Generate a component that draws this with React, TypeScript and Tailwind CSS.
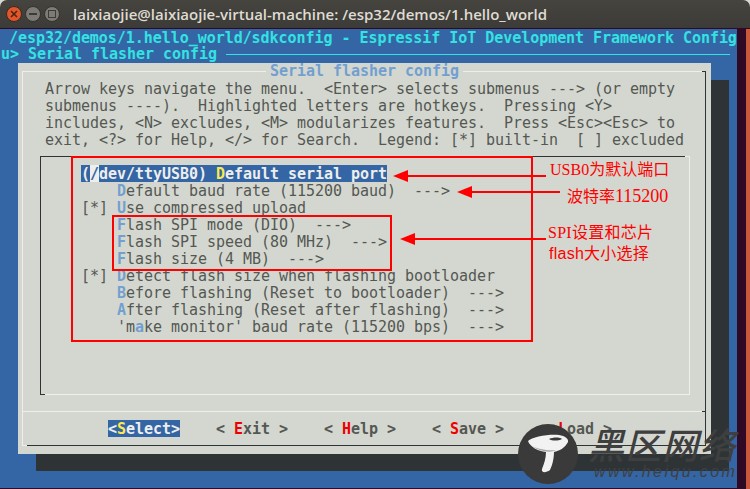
const MONO = "font-['DejaVu_Sans_Mono',monospace]";

// hotkey letter is at `hot`, rest of the row stays grey
const menuRows = [
  { pre: '    ', text: 'Default baud rate (115200 baud)  --->', hot: 0 },
  { pre: '[*] ', text: 'Use compressed upload', hot: 0 },
  { pre: '    ', text: 'Flash SPI mode (DIO)  --->', hot: 0 },
  { pre: '    ', text: 'Flash SPI speed (80 MHz)  --->', hot: 0 },
  { pre: '    ', text: 'Flash size (4 MB)  --->', hot: 0 },
  { pre: '[*] ', text: 'Detect flash size when flashing bootloader', hot: 0 },
  { pre: '    ', text: 'Before flashing (Reset to bootloader)  --->', hot: 0 },
  { pre: '    ', text: 'After flashing (Reset after flashing)  --->', hot: 0 },
  { pre: '    ', text: "'make monitor' baud rate (115200 bps)  --->", hot: 2 },
];

const buttons = ['Exit', 'Help', 'Save', 'Load'];

function MenuRow({ pre, text, hot }: { pre: string; text: string; hot: number }) {
  return (
    <div className="h-[17px] leading-[19px] whitespace-pre">
      {pre}
      {text.slice(0, hot)}
      <span className="font-bold text-[#729fcf]">{text[hot]}</span>
      {text.slice(hot + 1)}
    </div>
  );
}

function WindowButton({ children, color }: { children: React.ReactNode; color: string }) {
  return (
    <div className={`w-[16px] h-[16px] rounded-full border flex items-center justify-center ${color}`}>
      {children}
    </div>
  );
}

export default function App() {
  return (
    <div className={`relative w-[750px] h-[489px] overflow-hidden bg-[#d8d8d4] ${MONO}`}>
      {/* window title bar */}
      <div className="h-[28px] rounded-t-[7px] bg-gradient-to-b from-[#45443f] to-[#3c3b37] flex items-center pl-[6px] gap-[3px]">
        <WindowButton color="bg-[#e2562a] border-[#3a2a20]">
          <svg width="8" height="8" viewBox="0 0 8 8">
            <path d="M1 1L7 7M7 1L1 7" stroke="#4a2415" strokeWidth="1.6" />
          </svg>
        </WindowButton>
        <WindowButton color="bg-[#7c7b75] border-[#33322e]">
          <div className="w-[8px] h-[2px] bg-[#3c3b37]" />
        </WindowButton>
        <WindowButton color="bg-[#7c7b75] border-[#33322e]">
          <div className="w-[8px] h-[8px] border border-[#3c3b37]" />
        </WindowButton>
        <span className="ml-[10px] font-['Open_Sans',sans-serif] font-semibold text-[15px] text-[#dfdbd2] whitespace-pre">
          laixiaojie@laixiaojie-virtual-machine: /esp32/demos/1.hello_world
        </span>
      </div>

      <div className="flex h-[461px] bg-[#300a24] border-t border-[#300a24]">
        {/* terminal */}
        <div className="w-[737px] h-[459px] bg-[#3465a4] overflow-hidden text-[15px] leading-[17px] tracking-[-0.03px]">
          <div className="h-[17px] pt-[1px] pl-[9px] font-bold text-[#34e2e2] whitespace-pre tracking-[-0.045px]">
            /esp32/demos/1.hello_world/sdkconfig - Espressif IoT Development Framework Config
          </div>
          <div className="h-[17px] pl-px flex items-start font-bold text-[#34e2e2] whitespace-pre leading-[17px]">
            u&gt; Serial flasher config
            <div className="ml-[9px] mt-[8px] w-[504px] h-px bg-[#34e2e2]" />
          </div>

          {/* dialog */}
          <div className="relative ml-[18px] w-[693px] h-[391px] pt-[8px] pl-[4px] bg-[#d3d7cf] text-[#555753] shadow-[18px_17px_0_#2e3436]">
            <div className="relative w-[684px] h-[375px] border border-t-[#eeeeec] border-l-[#eeeeec] border-r-[#2e3436] border-b-[#2e3436]">
              <div className="absolute left-[243px] top-[-9px] px-[4px] bg-[#d3d7cf] font-bold text-[#729fcf] whitespace-pre">
                Serial flasher config
              </div>
              <div className="absolute right-[-1px] top-[-1px] w-[4px] h-px bg-[#2e3436]" />
              <div className="absolute left-[-1px] bottom-[-1px] w-[5px] h-px bg-[#eeeeec]" />
              <div className="absolute right-[-1px] top-[339px] w-[4px] h-px bg-[#2e3436]" />

              <div className="pt-[9px] pl-[22px] h-[84px] whitespace-pre">
                <div>Arrow keys navigate the menu.  &lt;Enter&gt; selects submenus ---&gt; (or empty</div>
                <div>submenus ----).  Highlighted letters are hotkeys.  Pressing &lt;Y&gt;</div>
                <div>includes, &lt;N&gt; excludes, &lt;M&gt; modularizes features.  Press &lt;Esc&gt;&lt;Esc&gt; to</div>
                <div>exit, &lt;?&gt; for Help, &lt;/&gt; for Search.  Legend: [*] built-in  [ ] excluded</div>
              </div>

              {/* menu list */}
              <div className="relative ml-[17px] w-[650px] h-[239px] pt-[8px] pl-[40px] border border-t-[#2e3436] border-l-[#2e3436] border-r-[#eeeeec] border-b-[#eeeeec]">
                <div className="absolute right-[-1px] top-[-1px] w-[5px] h-px bg-[#eeeeec]" />
                <div className="absolute left-[-1px] bottom-[-1px] w-[5px] h-px bg-[#2e3436]" />
                <div className="w-[306px] h-[17px] leading-[19px] bg-[#3465a4] text-[#eeeeec] font-bold whitespace-pre">
                  (<span className="inline-block h-[17px] bg-[#eeeeec] text-[#3465a4]">/</span>dev/ttyUSB0) <span className="text-[#fce94f]">D</span>efault serial port
                </div>
                {menuRows.map((r) => (
                  <MenuRow key={r.text} pre={r.pre} text={r.text} hot={r.hot} />
                ))}
              </div>

              {/* button row */}
              <div className="mt-[16px] pt-[8px] border-t border-[#eeeeec] flex gap-[36px] pl-[85px] whitespace-pre leading-[19px] font-bold">
                <div className="w-[72px] h-[17px] bg-[#3465a4] text-[#eeeeec]">
                  &lt;<span className="text-[#fce94f]">S</span>elect&gt;
                </div>
                {buttons.map((b) => (
                  <div key={b} className="w-[72px] h-[17px]">
                    &lt; <span className="text-[#ef0000]">{b[0]}</span>{b.slice(1)} &gt;
                  </div>
                ))}
              </div>
            </div>
          </div>
        </div>
        {/* strip of the next window */}
        <div className="ml-[9px] w-[4px] h-[461px] bg-[#c9573a]" />
      </div>

      {/* annotations drawn on the screenshot */}
      <div className="absolute left-[71px] top-[156px] w-[462px] h-[186px] border-2 border-[#ff0000]" />
      <div className="absolute left-[112px] top-[215px] w-[280px] h-[56px] border-2 border-[#ff0000]" />
      <svg className="absolute left-0 top-0" width="750" height="489">
        <g fill="#ff0000">
          <path d="M403 175H546V177H403Z" />
          <path d="M393 176L408 170V182Z" />
          <path d="M467 191H560V193H467Z" />
          <path d="M457 192L472 186V198Z" />
          <path d="M410 238H546V240H410Z" />
          <path d="M400 239L415 233V245Z" />
        </g>
      </svg>
      <div className="absolute left-[548px] top-[159px] flex flex-col text-[16px] leading-[22px] text-[#ff0000] font-['Liberation_Serif','Noto_Sans_CJK_SC',sans-serif] whitespace-pre">
        <div className="pl-[2px]">USB0为默认端口</div>
        <div className="pl-[19px] mt-[4px]">
          波特率<span className="text-[18px]">115200</span>
        </div>
        <div className="mt-[14px] tracking-[0.25px]">SPI设置和芯片</div>
        <div className="pl-px mt-[-1px] tracking-[0.25px] font-['Liberation_Sans','Noto_Sans_CJK_SC',sans-serif]">flash大小选择</div>
      </div>

      {/* watermark */}
      <div className="absolute left-[518px] top-[424px] flex text-[#3f3f3f] whitespace-pre italic">
        <div className="w-[60px] h-[60px] rounded-full bg-[#3a3a3a]">
          <svg width="60" height="60" viewBox="0 0 60 60">
            <path d="M10 17C14 13 30 10 41 11C47 12 51 15 50 18C47 24 41 27 36 28C36 35 34 42 32 46C28 49 23 49 24 45C26 40 28 34 28 28C20 27 12 23 10 17Z" fill="#f2f2f2" />
            <path d="M14 22C20 25 30 27 38 26C33 29 22 28 14 22Z" fill="#a8a8a8" />
            <path d="M31 15C35 13 42 13 44 15C40 17 34 17 31 15Z" fill="#3a3a3a" />
          </svg>
        </div>
        <div className="ml-[10px] flex flex-col">
          <div className="mt-[-1px] text-[36px] leading-[40px] tracking-[1px] font-medium font-['Noto_Sans_CJK_SC',sans-serif]">黑区网络</div>
          <div className="ml-[6px] text-[16px] leading-[18px] tracking-[2.4px] font-['Liberation_Sans',sans-serif]">www.heiqu.com</div>
        </div>
      </div>
    </div>
  );
}
